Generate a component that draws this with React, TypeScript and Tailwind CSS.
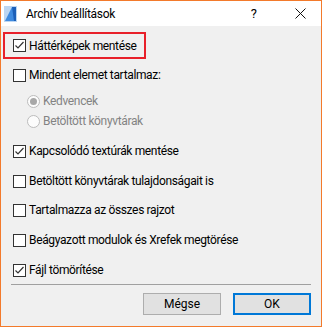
import type { ReactNode } from 'react';

const font = { fontFamily: 'Roboto, "Noto Sans", sans-serif' };

function CheckBox({ checked }: { checked?: boolean }) {
  return (
    <span className="w-[13px] h-[13px] border border-[#333333] bg-white flex items-center justify-center shrink-0">
      {checked && (
        <svg width="11" height="11" viewBox="0 0 11 11">
          <path d="M1.5 5.5 L4 8 L9.5 2" fill="none" stroke="#333333" strokeWidth="1.2" />
        </svg>
      )}
    </span>
  );
}

function Radio({ selected }: { selected?: boolean }) {
  return (
    <span className="w-[13px] h-[13px] rounded-full border border-[#bcbcbc] bg-[#fcfcfc] flex items-center justify-center shrink-0">
      {selected && <span className="w-[7px] h-[7px] rounded-full bg-[#a8a8a8]" />}
    </span>
  );
}

function Row({ checked, children, className = '' }: { checked?: boolean; children: ReactNode; className?: string }) {
  return (
    <div className={`h-[20px] flex items-center gap-[3px] pl-[12px] ${className}`}>
      <CheckBox checked={checked} />
      <span className="text-[12px] tracking-[-0.35px] text-black leading-none whitespace-nowrap">{children}</span>
    </div>
  );
}

function RadioRow({ selected, children }: { selected?: boolean; children: ReactNode }) {
  return (
    <div className="h-[20px] flex items-center gap-[3px] pl-[26px]">
      <Radio selected={selected} />
      <span className="text-[12px] tracking-[-0.35px] text-[#838383] leading-none whitespace-nowrap">{children}</span>
    </div>
  );
}

export default function App() {
  return (
    <div className="w-[322px] h-[327px] border border-[#f37a2b] bg-[#f0f0f0] flex flex-col" style={font}>
      {/* title bar */}
      <div className="h-[25px] bg-white flex items-center shrink-0">
        <svg width="13" height="16" viewBox="0 0 13 16" className="ml-[3px]">
          <rect x="0" y="0" width="13" height="16" fill="#bcd6f2" />
          <path d="M1 15 L8 1 L12 1 L12 15 Z" fill="#3f8be0" />
          <path d="M8 1 L12 1 L12 15 L10 15 Z" fill="#1c5fb8" />
        </svg>
        <span className="ml-[9px] text-[12px] tracking-[-0.3px] text-black">Archív beállítások</span>
        <span className="ml-auto text-[13px] text-black mr-[38px]">?</span>
        <svg width="11" height="11" viewBox="0 0 11 11" className="mr-[15px]">
          <path d="M0.5 0.5 L10.5 10.5 M10.5 0.5 L0.5 10.5" stroke="#111" strokeWidth="1" />
        </svg>
      </div>

      {/* options */}
      <div className="flex flex-col">
        <div className="mt-[6px] ml-[2px] w-[143px] h-[27px] border-2 border-[#e8202a] flex items-center gap-[3px] pl-[8px]">
          <CheckBox checked />
          <span className="text-[12px] tracking-[-0.35px] text-black leading-none whitespace-nowrap">Háttérképek mentése</span>
        </div>
        <Row className="mt-[6px]">Mindent elemet tartalmaz:</Row>
        <div className="mt-[6px]">
          <RadioRow selected>Kedvencek</RadioRow>
          <RadioRow>Betöltött könyvtárak</RadioRow>
        </div>
        <Row checked className="mt-[10px]">Kapcsolódó textúrák mentése</Row>
        <Row className="mt-[10px]">Betöltött könyvtárak tulajdonságait is</Row>
        <Row className="mt-[9px]">Tartalmazza az összes rajzot</Row>
        <Row className="mt-[10px]">Beágyazott modulok és Xrefek megtörése</Row>
        <Row checked className="mt-[10px]">Fájl tömörítése</Row>
      </div>

      <div className="mt-[4px] mx-[10px] h-px bg-[#a0a0a0]" />

      <div className="mt-[8px] flex justify-end gap-[12px] pr-[10px]">
        <button className="w-[78px] h-[22px] bg-[#e1e1e1] border border-[#adadad] text-[12px] text-black">Mégse</button>
        <button className="w-[78px] h-[22px] bg-[#e1e1e1] border-2 border-[#0078d7] text-[12px] text-black">OK</button>
      </div>
    </div>
  );
}
